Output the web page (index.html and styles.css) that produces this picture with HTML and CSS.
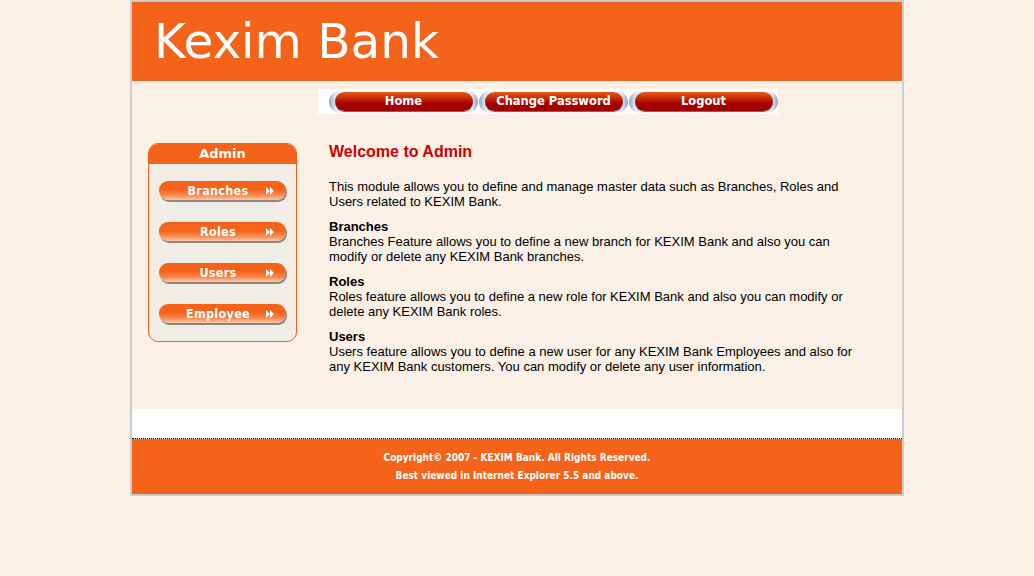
FILE: index.html
```html
<!DOCTYPE html>
<html>
<head>
<meta charset="utf-8">
<title>Kexim Bank</title>
<link rel="stylesheet" href="styles.css">
</head>
<body>
<div class="page">
  <header class="header">
    <div class="logo">Kexim Bank</div>
  </header>
  <nav class="nav">
    <a class="navbtn"><span class="navpill">Home</span></a>
    <a class="navbtn"><span class="navpill">Change Password</span></a>
    <a class="navbtn"><span class="navpill">Logout</span></a>
  </nav>
  <div class="main">
    <aside class="side">
      <div class="side-head">Admin</div>
      <div class="side-body">
        <a class="sbtn"><span class="sbtn-label">Branches</span><svg class="arr" viewBox="0 0 8 8" width="8" height="8"><path d="M0 0L4 4L0 8Z M4 0L8 4L4 8Z" fill="#fff"/></svg></a>
        <a class="sbtn"><span class="sbtn-label">Roles</span><svg class="arr" viewBox="0 0 8 8" width="8" height="8"><path d="M0 0L4 4L0 8Z M4 0L8 4L4 8Z" fill="#fff"/></svg></a>
        <a class="sbtn"><span class="sbtn-label">Users</span><svg class="arr" viewBox="0 0 8 8" width="8" height="8"><path d="M0 0L4 4L0 8Z M4 0L8 4L4 8Z" fill="#fff"/></svg></a>
        <a class="sbtn"><span class="sbtn-label">Employee</span><svg class="arr" viewBox="0 0 8 8" width="8" height="8"><path d="M0 0L4 4L0 8Z M4 0L8 4L4 8Z" fill="#fff"/></svg></a>
      </div>
    </aside>
    <section class="content">
      <h1 class="title">Welcome to Admin</h1>
      <p>This module allows you to define and manage master data such as Branches, Roles and Users related to KEXIM Bank.</p>
      <p><b>Branches</b><br>Branches Feature allows you to define a new branch for KEXIM Bank and also you can modify or delete any KEXIM Bank branches.</p>
      <p><b>Roles</b><br>Roles feature allows you to define a new role for KEXIM Bank and also you can modify or delete any KEXIM Bank roles.</p>
      <p><b>Users</b><br>Users feature allows you to define a new user for any KEXIM Bank Employees and also for any KEXIM Bank customers. You can modify or delete any user information.</p>
    </section>
  </div>
  <div class="spacer"></div>
  <footer class="footer">
    <div>Copyright&copy; 2007 - KEXIM Bank. All Rights Reserved.</div>
    <div>Best viewed in Internet Explorer 5.5 and above.</div>
  </footer>
</div>
</body>
</html>
```
FILE: styles.css
```css
html, body {
  margin: 0;
  padding: 0;
  background: #faf0e6;
}
.page {
  width: 770px;
  margin: 0 auto;
  border: 2px solid #cccccc;
  background: #faf0e6;
  font-family: "Liberation Sans", Arial, sans-serif;
}
.header {
  height: 79px;
  background: #f36319;
  display: flex;
  align-items: center;
}
.logo {
  color: #ffffff;
  font-family: "DejaVu Sans", Verdana, sans-serif;
  font-size: 48.5px;
  padding-left: 22px;
  margin-top: -1px;
}
.nav {
  margin: 8px 0 0 186px;
  width: 460px;
  height: 25px;
  background: #ffffff;
  display: flex;
  align-items: center;
  gap: 1px;
  padding-left: 11px;
  box-sizing: border-box;
}
.navbtn {
  width: 150px;
  height: 22px;
  border-radius: 11px;
  background: linear-gradient(90deg, #8fa2c4 0%, #dfe6f2 4%, #f4f6fa 8%, #f4f6fa 92%, #dfe6f2 96%, #8fa2c4 100%);
  display: flex;
  align-items: flex-start;
  justify-content: center;
  box-sizing: border-box;
  padding-top: 1px;
}
.navpill {
  width: 138px;
  height: 19px;
  border-radius: 10px;
  background: linear-gradient(#e65a1a 0%, #c8300a 30%, #a60000 60%, #9e0000 100%);
  box-shadow: 0 1px 0 #6b6b78;
  color: #ffffff;
  font-family: "DejaVu Sans", Verdana, sans-serif;
  font-weight: bold;
  font-size: 11.5px;
  display: flex;
  align-items: center;
  justify-content: center;
}
.main {
  display: flex;
  padding: 29px 0 0 16px;
  gap: 32px;
  align-items: flex-start;
}
.side {
  width: 149px;
  box-sizing: border-box;
  border: 1px solid #f36319;
  border-radius: 10px;
  overflow: hidden;
  background: #f0ece6;
}
.side-head {
  height: 20px;
  background: #f36319;
  color: #ffffff;
  font-family: "DejaVu Sans", Verdana, sans-serif;
  font-weight: bold;
  font-size: 13px;
  text-align: center;
  line-height: 20px;
}
.side-body {
  display: flex;
  flex-direction: column;
  gap: 22px;
  padding: 17px 0 18px 10px;
}
.sbtn {
  width: 127px;
  height: 19px;
  border-radius: 9px;
  background: linear-gradient(#f5621a 0%, #f5621a 45%, #f78a52 75%, #fbc8a8 100%);
  box-shadow: 1px 2px 0 0 #8c8680;
  color: #ffffff;
  font-family: "DejaVu Sans Condensed", "DejaVu Sans", sans-serif;
  font-weight: bold;
  font-size: 12.5px;
  letter-spacing: 0.3px;
  display: flex;
  align-items: center;
}
.sbtn-label {
  flex: 1;
  text-align: center;
  padding-left: 17px;
}
.arr {
  margin: 0 12px 0 6px;
  flex: none;
}
.content {
  width: 530px;
  font-size: 13px;
  line-height: 15px;
  color: #000000;
}
.title {
  color: #cc0000;
  font-size: 16px;
  font-weight: bold;
  margin: 0 0 18px 0;
  line-height: 18px;
}
.content p {
  margin: 0 0 10px 0;
}
.spacer {
  height: 29px;
  margin-top: 25px;
  background: #ffffff;
  border-bottom: 1px dotted #000000;
}
.footer {
  background: #f36319;
  color: #ffffff;
  font-family: "DejaVu Sans Condensed", "DejaVu Sans", sans-serif;
  font-weight: bold;
  font-size: 10px;
  text-align: center;
  padding: 10px 0 9px 0;
  line-height: 18px;
}
```
